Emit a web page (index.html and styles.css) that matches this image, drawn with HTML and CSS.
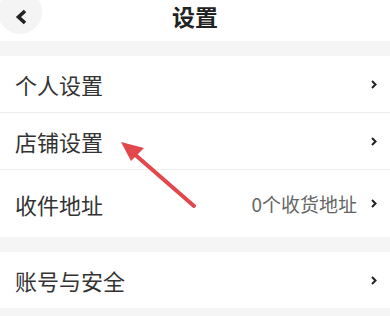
FILE: index.html
```html
<!DOCTYPE html>
<html lang="zh-CN">
<head>
    <meta charset="UTF-8">
    <meta name="viewport" content="width=device-width, initial-scale=1.0">
    <title>设置</title>
    <link rel="stylesheet" href="styles.css">
</head>
<body>
    <div class="settings-page">
        <div class="top-bar">
            <span class="back-btn">
                <svg width="13" height="16" viewBox="0 0 13 16"><polyline points="10,2 3.5,8 10,14" fill="none" stroke="#222" stroke-width="3.6" stroke-linejoin="miter"/></svg>
            </span>
            <h1>设置</h1>
        </div>

        <div class="group">
            <div class="row">
                <span class="label">个人设置</span>
                <span class="chevron"><svg width="6" height="9" viewBox="0 0 6 9"><polyline points="1,1 4.5,4.5 1,8" fill="none" stroke="#222" stroke-width="2"/></svg></span>
            </div>
            <div class="row">
                <span class="label">店铺设置</span>
                <span class="chevron"><svg width="6" height="9" viewBox="0 0 6 9"><polyline points="1,1 4.5,4.5 1,8" fill="none" stroke="#222" stroke-width="2"/></svg></span>
            </div>
            <div class="row row-tall">
                <span class="label">收件地址</span>
                <span class="value">0个收货地址</span>
                <span class="chevron"><svg width="6" height="9" viewBox="0 0 6 9"><polyline points="1,1 4.5,4.5 1,8" fill="none" stroke="#222" stroke-width="2"/></svg></span>
            </div>
        </div>

        <div class="group">
            <div class="row">
                <span class="label">账号与安全</span>
                <span class="chevron"><svg width="6" height="9" viewBox="0 0 6 9"><polyline points="1,1 4.5,4.5 1,8" fill="none" stroke="#222" stroke-width="2"/></svg></span>
            </div>
        </div>

        <!-- annotation arrow pointing at 店铺设置 -->
        <svg class="pointer" width="390" height="316" viewBox="0 0 390 316">
            <line x1="194" y1="206" x2="132" y2="152" stroke="#e2474c" stroke-width="4" stroke-linecap="round"/>
            <polygon points="121,142 144,148 131,161" fill="#e2474c"/>
        </svg>
    </div>
</body>
</html>
```

FILE: styles.css
```css
body, html {
    margin: 0;
    padding: 0;
    background-color: #f5f5f5;
    font-family: 'Noto Sans CJK SC', 'Noto Sans', sans-serif;
}

.settings-page {
    position: relative;
    width: 390px;
    height: 316px;
    overflow: hidden;
    background-color: #f5f5f5;
}

.top-bar {
    position: relative;
    height: 41px;
    background-color: #fff;
    display: flex;
    align-items: flex-start;
    justify-content: center;
    margin-bottom: 15px;
}

.top-bar h1 {
    margin: 0;
    font-size: 23px;
    font-weight: 700;
    color: #222;
    line-height: 33px;
}

.back-btn {
    position: absolute;
    left: -2px;
    top: -10px;
    width: 44px;
    height: 44px;
    border-radius: 50%;
    background-color: #f4f4f4;
    display: flex;
    align-items: center;
    justify-content: center;
}

.back-btn svg {
    margin-top: 9px;
    margin-left: 2px;
}

.group {
    background-color: #fff;
    margin-bottom: 15px;
}

.row {
    height: 56px;
    display: flex;
    align-items: center;
    padding: 0 13px 0 15px;
    border-bottom: 1px solid #eee;
}

.row:last-child {
    border-bottom: none;
}

.row-tall {
    height: 67px;
}

.label {
    flex: 1;
    font-size: 22px;
    color: #333;
}

.value {
    font-size: 19px;
    color: #666;
    margin-right: 14px;
}

.chevron {
    display: flex;
    align-items: center;
}

.pointer {
    position: absolute;
    left: 0;
    top: 0;
}
```
